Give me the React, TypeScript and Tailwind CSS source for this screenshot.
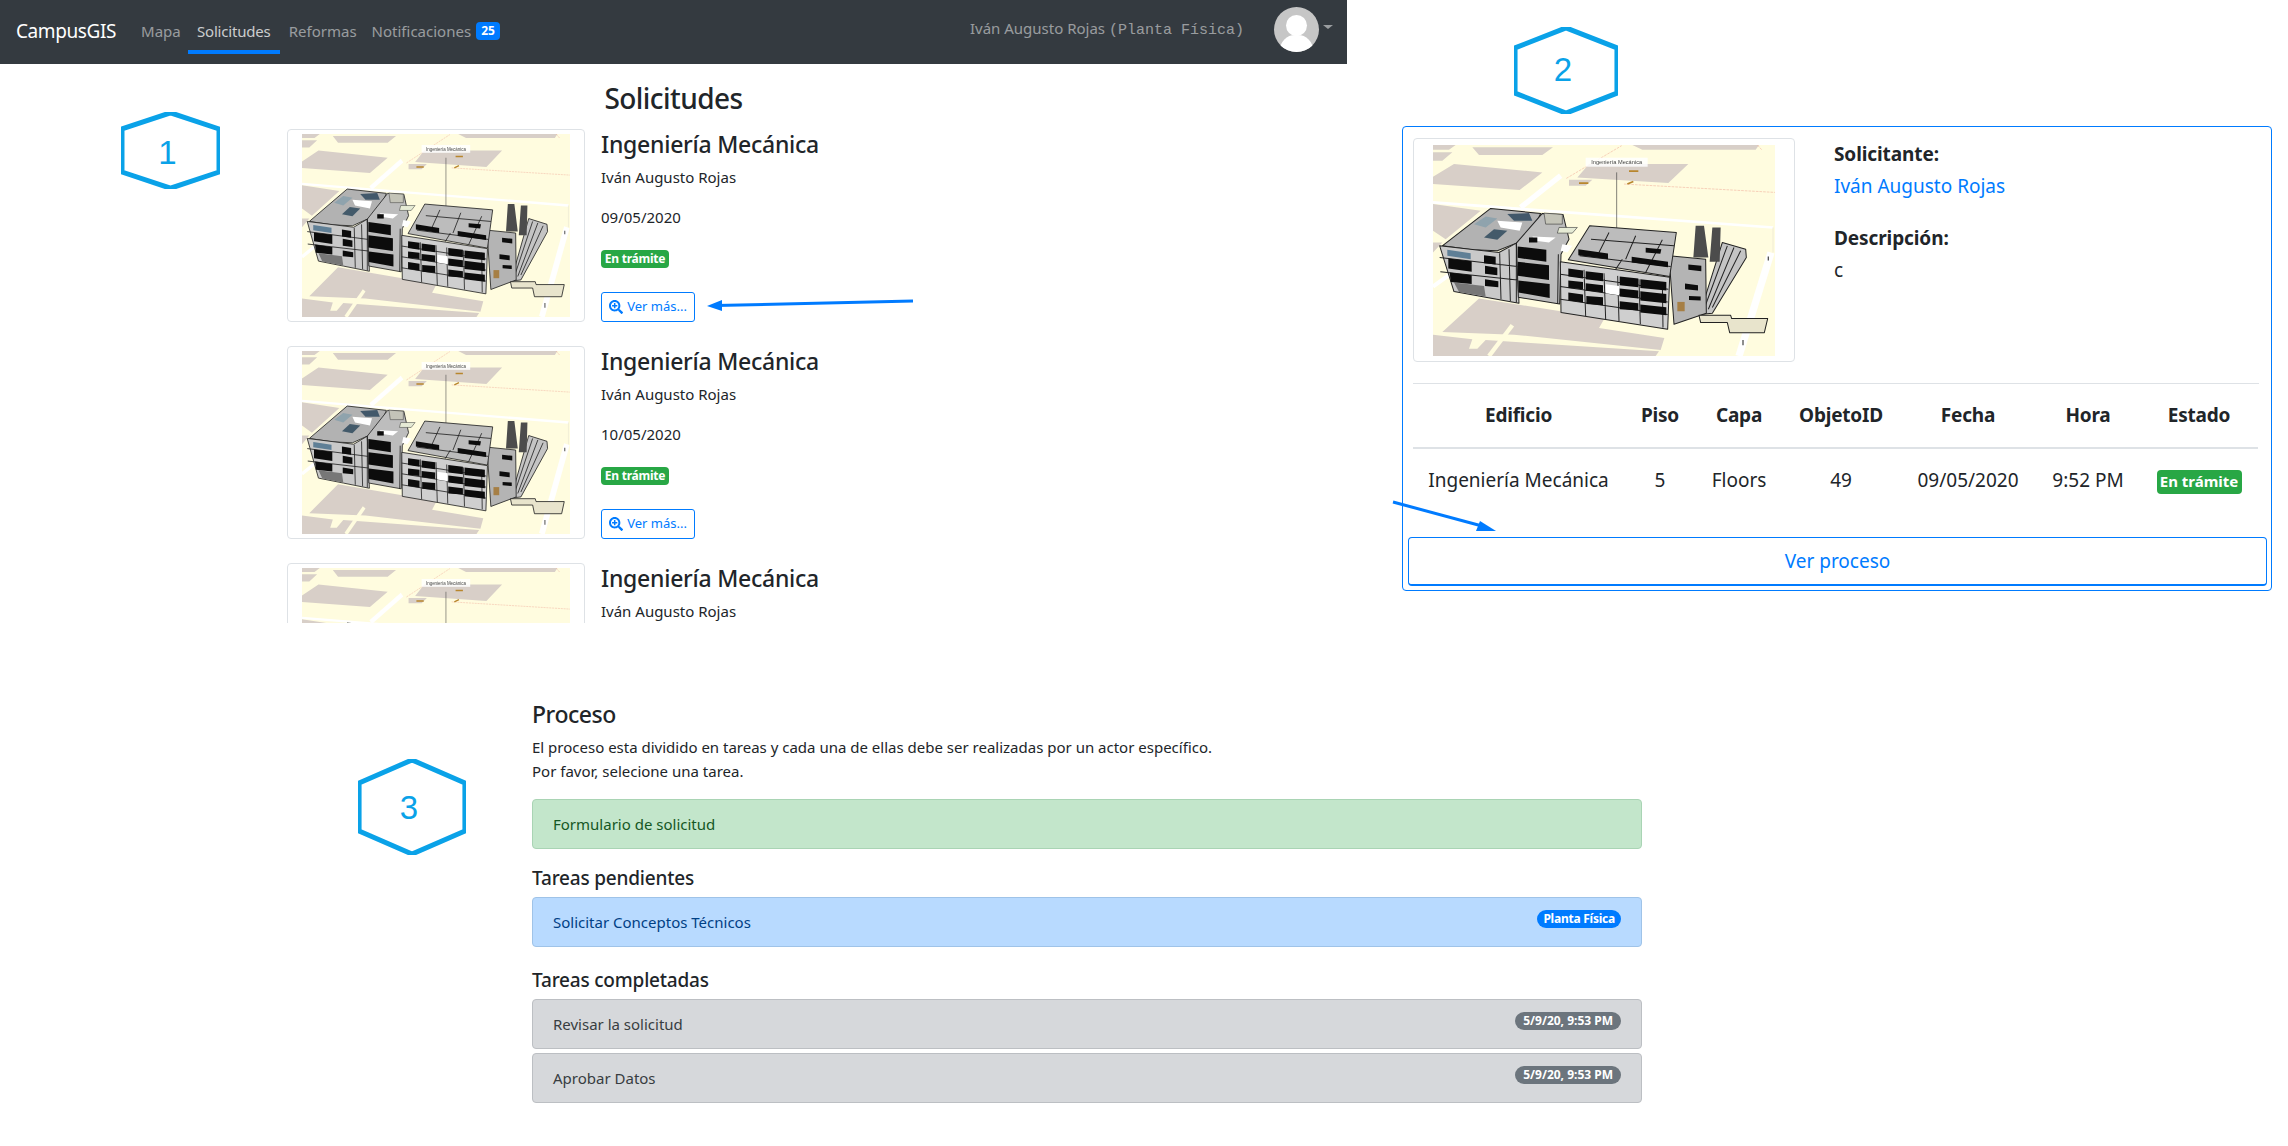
import React from 'react';
import { FaSearchPlus } from 'react-icons/fa';

const solicitudes = [
  { id: 1, fecha: '09/05/2020' },
  { id: 2, fecha: '10/05/2020' },
  { id: 3, fecha: '10/05/2020' },
];

const columnas = [
  { titulo: 'Edificio', ancho: 'w-[211px]' },
  { titulo: 'Piso', ancho: 'w-[72px]' },
  { titulo: 'Capa', ancho: 'w-[86px]' },
  { titulo: 'ObjetoID', ancho: 'w-[118px]' },
  { titulo: 'Fecha', ancho: 'w-[136px]' },
  { titulo: 'Hora', ancho: 'w-[104px]' },
  { titulo: 'Estado', ancho: 'w-[118px]' },
];

// render 3D del edificio sobre el mapa
function MapaEdificio({ className }: { className: string }) {
  const vidrios = [
    'M58 348 128 356 128 388 58 378Z',
    'M62 390 128 398 128 424 65 418Z',
    'M165 338 200 343 200 366 165 362Z',
    'M168 370 205 376 205 398 168 394Z',
    'M168 410 208 416 208 434 168 430Z',
    'M266 312 352 322 352 358 266 346Z',
    'M266 358 360 368 360 412 266 400Z',
    'M268 414 362 424 362 466 268 450Z',
    'M418 378 462 384 462 408 418 402Z',
    'M470 386 522 392 522 416 470 410Z',
    'M572 402 628 408 628 434 572 428Z',
    'M634 410 712 418 712 444 634 436Z',
    'M418 414 462 418 462 440 418 436Z',
    'M470 422 522 428 522 450 470 444Z',
    'M572 438 628 444 628 468 572 462Z',
    'M634 446 712 454 712 482 634 474Z',
    'M418 450 462 456 462 480 418 474Z',
    'M472 460 522 464 522 488 472 484Z',
    'M572 476 628 482 628 504 572 500Z',
    'M634 486 712 494 712 518 634 510Z',
    'M448 320 537 333 537 350 448 338Z',
    'M608 343 717 358 717 374 608 360Z',
    'M650 316 697 320 694 334 650 330Z',
    'M778 366 817 370 817 386 778 382Z',
    'M768 423 807 428 807 444 768 440Z',
    'M780 460 815 462 815 474 780 472Z',
    'M300 285 325 285 325 300 300 300Z',
  ];
  return (
    <svg viewBox="12 8 1026 632" preserveAspectRatio="none" className={className}>
      <rect x="12" y="8" width="1026" height="632" fill="#fffcdf" />
      <g fill="#d8cfc8">
        <path d="M12 8H80L60 22H12ZM130 15H372L340 38H150ZM12 30H70L40 55H12ZM75 65 340 90 272 143 12 125V103ZM480 65H778L718 122 445 105ZM420 112H490L470 130H420ZM610 8H990L980 22H640ZM12 185 155 205 50 290 12 265ZM12 300 40 300 12 330Z" />
        <path d="M150 468 390 505 525 530 510 556 706 586 695 622 255 576 40 568ZM12 576 130 590 120 618 145 618 170 592 690 626 680 640H12Z" />
      </g>
      <path d="M250 548 180 640" fill="none" stroke="#fffcdf" strokeWidth="13" />
      <g fill="none" stroke="#fff">
        <path d="M12 180 1032 255" strokeWidth="8" />
        <path d="M395 100 275 195" strokeWidth="16" />
        <path d="M1026 330 930 640" strokeWidth="22" />
        <path d="M12 432 70 390" strokeWidth="12" />
      </g>
      <path d="M1032 255V330" stroke="#e8e4d0" strokeWidth="2" />
      <path d="M412 108 578 10M585 125 1038 150M985 8 1000 24" fill="none" stroke="#f3b9a5" strokeWidth="2" strokeDasharray="8 3" />
      <path d="M1018 342v12M942 592v16" stroke="#555" strokeWidth="4" />

      <rect x="470" y="46" width="186" height="27" fill="#fff" opacity="0.85" />
      <text x="563" y="65" textAnchor="middle" fontSize="17" fill="#444" fontFamily="'Liberation Sans', sans-serif">Ingeniería Mecánica</text>
      <path d="M450 122h28M595 125l18-8M600 86h28" stroke="#b8862d" strokeWidth="5" />
      <path d="M563 90V275" stroke="#444" strokeWidth="2" />

      <g stroke="#222" strokeWidth="3" strokeLinejoin="round">
        <path d="M880 300 950 320 952 345 850 512 812 516Z" fill="#c4c4c4" />
        <path d="M895 310 825 500M915 315 838 500M935 325 850 495" fill="none" />
        <path d="M720 340 830 350 832 512 735 545Z" fill="#b4b4b4" />
        <path d="M810 518H905L908 528H1016L1006 570H902L895 540H815Z" fill="#e8e4cc" />
        <path d="M40 310 185 198 335 213 300 290 262 302 205 325 130 322Z" fill="#b2b2b2" />
        <path d="M32 310 210 330 262 302 270 482 170 464 75 447Z" fill="#c9c9c9" />
        <path d="M262 302 340 213 402 216 420 290 396 335 392 484 268 464Z" fill="#bdbdbd" />
        <path d="M418 352 482 250 742 270 722 402Z" fill="#bcbcbc" />
        <path d="M394 358 722 404 716 560 396 510Z" fill="#cfcfcf" />
        <path d="M486 290 735 310M452 340 725 372M540 270 505 340M620 280 590 350M700 292 650 390M580 350 560 380" fill="none" />
        <path d="M394 395 718 440M394 432 716 478M394 470 716 516M465 382 470 520M525 392 530 530M566 400 570 535M630 410 634 545M700 418 702 555" fill="none" />
        <path d="M212 332 216 470M240 320 244 475M262 302 262 480M388 335 386 484M32 345 265 372M34 388 265 412" fill="none" />
      </g>
      <path d="M800 250H825L838 345H793ZM850 255H875L872 358H842Z" fill="#4c4c4c" />
      <path d="M135 245 170 222 205 228 170 255Z" fill="#8fa3ad" />
      <path d="M165 285 195 260 235 265 205 292Z" fill="#435a6a" />
      <path d="M235 215 300 212 310 235 255 235Z" fill="#42586a" />
      <path d="M205 235 280 240 272 265 215 255ZM310 282 380 285 360 300 320 295ZM400 305 430 310 415 330 395 325ZM530 425 570 430 570 458 530 452Z" fill="#fff" />
      <path d="M345 212 400 216 400 245 350 245Z" fill="#c4c4b8" stroke="#444" strokeWidth="2" />
      <path d="M390 255 445 255 430 272 385 272Z" fill="#e6ebd5" stroke="#444" strokeWidth="2" />
      <path d="M55 322 125 332 125 350 55 340Z" fill="#5f7f96" />
      <path d="M75 420 165 430 170 462 90 448Z" fill="#777" />
      <path d="M745 478h22v28h-22Z" fill="#a67f45" />
      <g fill="#0c0c0c">
        {vidrios.map((d) => (
          <path key={d} d={d} />
        ))}
      </g>
    </svg>
  );
}

function Hexagono({ numero, className, claseNumero, puntos }: { numero: string; className: string; claseNumero: string; puntos: string }) {
  return (
    <div className={`absolute flex items-center justify-center ${className}`}>
      <svg viewBox="0 0 100 100" preserveAspectRatio="none" className="absolute inset-0 h-full w-full">
        <polygon points={puntos} fill="none" stroke="#0aa2e8" strokeWidth="5" vectorEffect="non-scaling-stroke" />
      </svg>
      <span className={`relative font-['Liberation_Sans',sans-serif] text-[33px] leading-none text-[#0aa2e8] ${claseNumero}`}>{numero}</span>
    </div>
  );
}

function Flecha({ className, viewBox, d, punta }: { className: string; viewBox: string; d: string; punta: string }) {
  return (
    <svg viewBox={viewBox} className={`absolute ${className}`}>
      <path d={d} fill="none" stroke="#007bff" strokeWidth="3" />
      <polygon points={punta} fill="#007bff" />
    </svg>
  );
}

function BadgeTramite() {
  return (
    <span className="inline-flex h-[18px] w-[68px] items-center justify-center rounded-[4px] bg-[#28a745] text-[12px] font-bold tracking-[-0.02em] text-white">
      En trámite
    </span>
  );
}

function Solicitud({ fecha }: { fecha: string }) {
  return (
    <div className="flex h-[193px] shrink-0 items-start gap-[16px]">
      <div className="flex h-[193px] w-[298px] items-center justify-center rounded-[4px] border border-[#dee2e6] bg-white">
        <MapaEdificio className="h-[183px] w-[268px] blur-[0.3px]" />
      </div>
      <div className="-mt-px flex flex-col items-start">
        <h4 className="text-[23px] font-medium leading-8 tracking-[-0.25px] text-[#212529]">Ingeniería Mecánica</h4>
        <div className="mt-[5px] text-[15px] leading-6 text-[#212529]">Iván Augusto Rojas</div>
        <div className="mt-[16px] text-[15px] leading-6 text-[#212529]">{fecha}</div>
        <div className="mt-[21px] flex">
          <BadgeTramite />
        </div>
        <button className="mt-[24px] flex h-[30px] w-[94px] items-center justify-center gap-[4px] rounded-[3px] border border-[#007bff] text-[13px] text-[#007bff]">
          <FaSearchPlus className="h-[14px] w-[14px]" />
          Ver más...
        </button>
      </div>
    </div>
  );
}

function Tarea({ texto, tono, badge, tonoBadge }: { texto: string; tono: string; badge?: string; tonoBadge?: string }) {
  return (
    <div className={`flex h-[50px] items-start justify-between rounded-[4px] border pl-[20px] pr-[20px] pt-[12px] ${tono}`}>
      <span className="text-[15px] leading-6">{texto}</span>
      {badge && (
        <span className={`flex h-[18px] items-center rounded-full text-[12px] font-bold text-white ${tonoBadge}`}>
          {badge}
        </span>
      )}
    </div>
  );
}

export default function App() {
  return (
    <div className="relative h-[1146px] w-[2288px] overflow-hidden bg-white font-['Noto_Sans',sans-serif] text-[#212529]">
      <div className="flex items-start">
        <div className="w-[1347px] shrink-0">
          <nav className="flex h-[64px] items-start bg-[#343a40] text-[15px]">
            <span className="ml-[16px] mt-[15px] text-[19px] leading-8 tracking-[-0.4px] text-white">CampusGIS</span>
            <a className="ml-[25px] mt-[19px] leading-6 text-white/50">Mapa</a>
            <a className="ml-[7px] flex h-[54px] w-[92px] justify-center border-b-4 border-[#007bff] pt-[19px] leading-6 tracking-[-0.2px] text-white/75">
              Solicitudes
            </a>
            <a className="ml-[9px] mt-[19px] leading-6 text-white/50">Reformas</a>
            <a className="ml-[15px] mt-[19px] leading-6 text-white/50">Notificaciones</a>
            <span className="ml-[5px] mt-[22px] flex h-[18px] w-[24px] items-center justify-center rounded-[4px] bg-[#007bff] text-[12px] font-bold text-white">
              25
            </span>
            <span className="ml-auto mt-[16px] leading-6 text-white/50">
              Iván Augusto Rojas <span className="font-['Liberation_Mono',monospace] text-[15px]">(Planta Física)</span>
            </span>
            <div className="relative ml-[30px] mt-[7px] h-[45px] w-[45px] overflow-hidden rounded-full bg-[#c6c6c6]">
              <div className="absolute left-[12px] top-[8px] h-[21px] w-[21px] rounded-full bg-white" />
              <div className="absolute left-[6px] top-[28px] h-[30px] w-[33px] rounded-full bg-white" />
            </div>
            <div className="ml-[4px] mr-[14px] mt-[25px] h-0 w-0 border-x-[5px] border-t-[4px] border-x-transparent border-t-white/50" />
          </nav>
          <h3 className="mt-[17px] text-center text-[28px] font-medium leading-[34px] tracking-[-0.02em]">Solicitudes</h3>
          <div className="ml-[287px] mt-[14px] flex h-[494px] flex-col gap-[24px] overflow-hidden">
            {solicitudes.map((s) => (
              <Solicitud key={s.id} fecha={s.fecha} />
            ))}
          </div>
        </div>

        <div className="ml-[55px] mt-[126px] h-[465px] w-[870px] shrink-0 rounded-[4px] border border-[#007bff]">
          <div className="flex items-start pl-[10px] pt-[11px]">
            <div className="flex h-[224px] w-[382px] items-center justify-center rounded-[4px] border border-[#dee2e6]">
              <MapaEdificio className="h-[211px] w-[342px] blur-[0.3px]" />
            </div>
            <div className="ml-[39px] text-[19px]">
              <div className="mt-[1px] font-bold leading-[30px] tracking-[-0.1px]">Solicitante:</div>
              <a className="mt-[2px] block leading-[30px] text-[#007bff]">Iván Augusto Rojas</a>
              <div className="mt-[22px] font-bold leading-[30px] tracking-[-0.1px]">Descripción:</div>
              <p className="mt-[2px] leading-[30px]">c</p>
            </div>
          </div>
          <div className="ml-[10px] mr-[12px] mt-[21px] h-px bg-[#dee2e6]" />
          <table className="ml-[10px] w-[845px] table-fixed text-[19px]">
            <thead>
              <tr>
                {columnas.map((c) => (
                  <th key={c.titulo} className={`h-[64px] border-b-2 border-[#dee2e6] text-center font-bold tracking-[-0.2px] ${c.ancho}`}>
                    {c.titulo}
                  </th>
                ))}
              </tr>
            </thead>
            <tbody>
              <tr className="h-[64px] text-center">
                <td>Ingeniería Mecánica</td>
                <td>5</td>
                <td>Floors</td>
                <td>49</td>
                <td>09/05/2020</td>
                <td>9:52 PM</td>
                <td>
                  <span className="inline-flex h-[24px] w-[85px] items-center justify-center rounded-[4px] bg-[#28a745] text-[15px] font-bold text-white">
                    En trámite
                  </span>
                </td>
              </tr>
            </tbody>
          </table>
          <button className="ml-[5px] mt-[25px] h-[49px] w-[859px] rounded-[4px] border border-b-2 border-[#007bff] text-[19px] text-[#007bff]">
            Ver proceso
          </button>
        </div>
      </div>

      <section className="ml-[532px] mt-[75px] w-[1110px]">
        <h4 className="text-[23px] font-medium leading-8 tracking-[-0.02em]">Proceso</h4>
        <p className="mt-[5px] text-[15px] leading-6">
          El proceso esta dividido en tareas y cada una de ellas debe ser realizadas por un actor específico.
        </p>
        <p className="text-[15px] leading-6">Por favor, selecione una tarea.</p>
        <div className="mt-[16px]">
          <Tarea texto="Formulario de solicitud" tono="border-[#a9d4b4] bg-[#c3e6cb] text-[#155724]" />
        </div>
        <h5 className="mt-[17px] text-[19px] font-medium leading-6 tracking-[-0.2px]">Tareas pendientes</h5>
        <div className="mt-[7px]">
          <Tarea
            texto="Solicitar Conceptos Técnicos"
            tono="border-[#9fc3e8] bg-[#b8daff] text-[#004085]"
            badge="Planta Física"
            tonoBadge="bg-[#007bff] px-[6px] tracking-[-0.02em]"
          />
        </div>
        <h5 className="mt-[21px] text-[19px] font-medium leading-6 tracking-[-0.2px]">Tareas completadas</h5>
        <div className="mt-[7px] flex flex-col gap-[4px]">
          <Tarea texto="Revisar la solicitud" tono="border-[#bcbfc3] bg-[#d6d8db] text-[#383d41]" badge="5/9/20, 9:53 PM" tonoBadge="bg-[#6c757d] px-[8px]" />
          <Tarea texto="Aprobar Datos" tono="border-[#bcbfc3] bg-[#d6d8db] text-[#383d41]" badge="5/9/20, 9:53 PM" tonoBadge="bg-[#6c757d] px-[8px]" />
        </div>
      </section>

      {/* anotaciones sobre la captura */}
      <Hexagono numero="1" className="left-[121px] top-[112px] h-[77px] w-[99px]" claseNumero="-translate-x-[3px] translate-y-[2px]" puntos="1,22 50,1 99,22 99,78 50,99 1,78" />
      <Hexagono numero="2" className="left-[1514px] top-[27px] h-[87px] w-[104px]" claseNumero="-translate-x-[3px] -translate-y-[1px]" puntos="1,24 50,1 99,24 99,76 50,99 1,76" />
      <Hexagono numero="3" className="left-[358px] top-[759px] h-[96px] w-[108px]" claseNumero="-translate-x-[3px]" puntos="1,25 50,1 99,25 99,75 50,99 1,75" />
      <Flecha className="left-[705px] top-[296px] h-[16px] w-[210px]" viewBox="705 296 210 16" d="M913 301 716 305.5" punta="707,306 722,300 722,311" />
      <Flecha className="left-[1390px] top-[498px] h-[36px] w-[108px]" viewBox="1390 498 108 36" d="M1393 502 1482 526" punta="1496,531 1476,531 1480,521" />
    </div>
  );
}
